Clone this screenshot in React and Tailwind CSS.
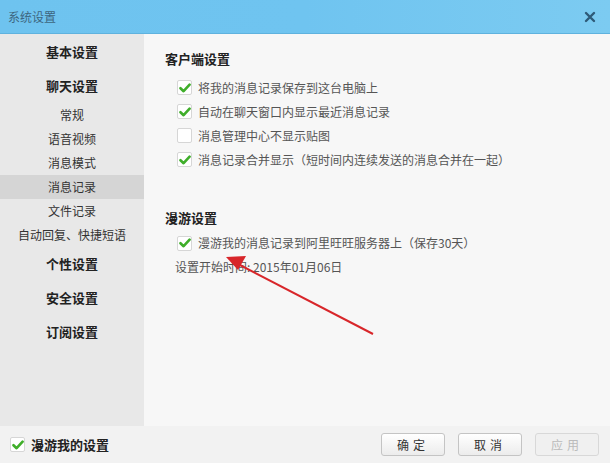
import React from "react";

const font = { fontFamily: '"Noto Sans CJK SC", "Liberation Sans", sans-serif' };

const Check = ({ checked }) => (
  <span className="flex h-[15px] w-[15px] shrink-0 items-center justify-center rounded-[2px] border border-[#d6d6d6] bg-white">
    {checked && (
      <svg width="12" height="10" viewBox="0 0 12 10">
        <path d="M1.5 5.2 L4.6 8.2 L10.6 1.6" fill="none" stroke="#3fae2a" strokeWidth="2.6" strokeLinecap="round" strokeLinejoin="round" />
      </svg>
    )}
  </span>
);

const Row = ({ checked, children }) => (
  <div className="flex h-[24px] items-center gap-[6px] pl-[12px]">
    <Check checked={checked} />
    <span className="whitespace-nowrap text-[12px] text-[#555]">{children}</span>
  </div>
);

const navItems = [
  { label: "基本设置", bold: true, h: "h-[34px]" },
  { label: "聊天设置", bold: true, h: "h-[34px]" },
  { label: "常规", h: "h-[24px]" },
  { label: "语音视频", h: "h-[24px]" },
  { label: "消息模式", h: "h-[24px]" },
  { label: "消息记录", h: "h-[24px]", active: true },
  { label: "文件记录", h: "h-[24px]" },
  { label: "自动回复、快捷短语", h: "h-[24px]" },
  { label: "个性设置", bold: true, h: "h-[34px]" },
  { label: "安全设置", bold: true, h: "h-[34px]" },
  { label: "订阅设置", bold: true, h: "h-[34px]" },
];

export default function App() {
  return (
    <div className="relative flex h-[463px] w-[610px] flex-col overflow-hidden bg-[#f2f2f2]" style={font}>
      {/* title bar */}
      <div className="flex h-[34px] shrink-0 items-center justify-between border-b border-[#5fb2de] bg-gradient-to-r from-[#6ec3ef] via-[#6fc4f0] to-[#7ccbf1] pl-[8px] pr-[14px]">
        <span className="text-[12px] text-[#3d6680]">系统设置</span>
        <svg width="12" height="12" viewBox="0 0 12 12">
          <path d="M2 2 L10 10 M10 2 L2 10" stroke="#2e5a78" strokeWidth="2.4" strokeLinecap="round" />
        </svg>
      </div>

      {/* body */}
      <div className="flex h-[392px] shrink-0">
        <div className="flex w-[144px] shrink-0 flex-col bg-[#e8e8e8] pt-[1px]">
          {navItems.map((it) => (
            <div
              key={it.label}
              className={`flex ${it.h} items-center justify-center whitespace-nowrap ${it.active ? "bg-[#d5d5d5]" : ""} ${
                it.bold ? "text-[13px] font-bold text-[#222]" : "text-[12px] text-[#333]"
              }`}
            >
              {it.label}
            </div>
          ))}
        </div>

        <div className="flex flex-1 flex-col bg-[#f7f7f7] pl-[21px] pt-[15px]">
          <div className="mb-[7px] text-[13px] font-bold text-[#222]">客户端设置</div>
          <Row checked>将我的消息记录保存到这台电脑上</Row>
          <Row checked>自动在聊天窗口内显示最近消息记录</Row>
          <Row>消息管理中心不显示贴图</Row>
          <Row checked>消息记录合并显示（短时间内连续发送的消息合并在一起）</Row>

          <div className="mb-[4px] mt-[36px] text-[13px] font-bold text-[#222]">漫游设置</div>
          <Row checked>漫游我的消息记录到阿里旺旺服务器上（保存30天）</Row>
          <div className="h-[24px] pl-[10px] text-[12px] leading-[24px] text-[#555]">设置开始时间: 2015年01月06日</div>
        </div>
      </div>

      {/* footer */}
      <div className="flex flex-1 items-center justify-between pl-[10px] pr-[11px]">
        <div className="flex items-center gap-[6px]">
          <Check checked />
          <span className="text-[13px] font-bold text-[#222]">漫游我的设置</span>
        </div>
        <div className="flex gap-[13px]">
          <button className="h-[23px] w-[64px] rounded-[3px] border border-[#c4c4c4] bg-gradient-to-b from-white to-[#ececec] text-[12px] tracking-[4px] text-[#333]">确定</button>
          <button className="h-[23px] w-[64px] rounded-[3px] border border-[#c4c4c4] bg-gradient-to-b from-white to-[#ececec] text-[12px] tracking-[4px] text-[#333]">取消</button>
          <button className="h-[23px] w-[64px] rounded-[3px] border border-[#d8d8d8] bg-[#f0f0f0] text-[12px] tracking-[4px] text-[#bbb]">应用</button>
        </div>
      </div>

      {/* red annotation arrow */}
      <svg className="pointer-events-none absolute left-0 top-0" width="610" height="463">
        <line x1="373" y1="334" x2="238" y2="264" stroke="#d8262a" strokeWidth="2" />
        <polygon points="226,257 246,256 238,270" fill="#d8262a" />
      </svg>
    </div>
  );
}
